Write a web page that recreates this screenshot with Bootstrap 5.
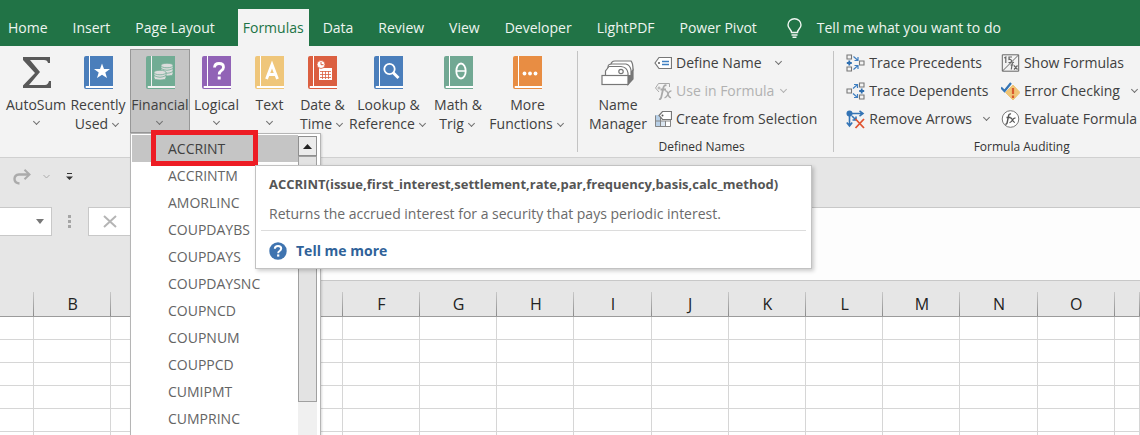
<!DOCTYPE html>
<html lang="en">
<head>
<meta charset="utf-8">
<meta name="viewport" content="width=device-width, initial-scale=1">
<title>Workbook - Formulas</title>
<link href="https://cdn.jsdelivr.net/npm/bootstrap@5.3.0/dist/css/bootstrap.min.css" rel="stylesheet">
<style>
  body { font-family: "Open Sans", "Noto Sans", sans-serif; font-size: 14px; line-height: 20px; color: #404040; background: #fff; }
  button { color: inherit; }
  svg { display: block; flex: none; }

  /* ribbon tabs */
  .tabs-bar { background: #217346; height: 46px; padding-top: 9px; flex: none; }
  .tabs-bar .nav-link { color: #eef5f0; padding: 9px 12px 8px 13px; white-space: nowrap; }
  .tabs-bar .nav-link.active { color: #217346; background: #f3f3f3; padding: 9px 5px 8px; margin: 0 1px 0 11px; }
  .tell-me { color: #eef5f0; gap: 15px; margin-left: 18px; white-space: nowrap; }

  /* ribbon body */
  .ribbon { background: #f3f3f3; height: 112px; border-bottom: 1px solid #d0d0d0; padding-top: 3px; flex: none; }
  .big-group { padding: 0 10px 0 6px; }
  .big-btn { border: 1px solid transparent; background: none; padding: 6px 0 0; line-height: 19px; white-space: nowrap; height: 84px; width: 100%; display: flex; flex-direction: column; align-items: center; gap: 6px; }
  .big-btn.opened { background: #c5c5c5; border-color: #989898; }
  .big-btn.opened .book { opacity: .8; }
  .w-s { width: 53px; } .w-m { width: 60px; } .w-l { width: 64px; } .w-xl { width: 79px; }
  .label-box { height: 38px; display: flex; flex-direction: column; align-items: center; }
  .chev { display: inline-block; width: 5px; height: 5px; border: solid #707070; border-width: 0 1px 1px 0; transform: rotate(45deg); margin: 0 3px 3px 5px; }
  .label-box > .chev { margin: 5px 0 0; }
  .sm-btn { border: 0; background: none; padding: 0; display: flex; align-items: center; gap: 4px; height: 28px; white-space: nowrap; }
  .sm-btn:disabled { color: #b1b1b1; }
  .sm-btn .chev { margin: 0 0 4px 10px; }
  .sm-btn:disabled .chev { border-color: #b1b1b1; margin-left: 3px; }
  .audit-group { padding-left: 12px; }
  .audit-group .sm-btn { margin-right: 12px; }
  .audit-group .chev { margin-left: 8px; }
  .group-name { font-size: 12px; line-height: 16px; text-align: center; margin-top: 6px; color: #333; }
  .vrule { width: 1px; background: #c3c3c3; margin: 2px 0 5px; flex: none; }

  /* function list */
  .fn-menu { position: absolute; left: 0; top: 84px; width: 191px; height: calc(100vh - 133px); background: #fff; border: 1px solid #b5b5b5; border-bottom: 0; padding: 1px 1px 0; z-index: 20; box-shadow: 1px 1px 2px rgba(0,0,0,.15); }
  .fn-list { list-style: none; margin: 0; padding: 0; width: 166px; }
  .fn-list button { display: block; width: 100%; border: 0; background: none; text-align: left; height: 27px; padding: 0 0 0 36px; color: #646464; }
  .fn-list li:first-child button { background: #c5c5c5; color: #404040; }
  .scroll-track { width: 19px; background: #f0f0f0; margin: 1px 2px 0 auto; }
  .scroll-up { height: 20px; border: 1px solid #8f8f8f; background: #ececec; padding: 0; display: flex; align-items: center; justify-content: center; width: 100%; }
  .scroll-thumb { height: 246px; border: 1px solid #a0a0a0; background: #e3e3e3; }
  .marker { position: absolute; left: 20px; top: -4px; width: 107px; height: 36px; border: 5px solid #ed1c24; }
  .fn-tip { position: absolute; left: 124px; top: 31px; width: 557px; height: 104px; background: #fff; border: 1px solid #c2c2c2; box-shadow: 2px 2px 4px rgba(0,0,0,.2); padding: 8px 5px 0; color: #6a6a6a; white-space: nowrap; z-index: 2; }
  .fn-tip strong, .fn-tip p { display: block; margin: 0; padding-left: 8px; }
  .fn-tip strong { color: #555; font-size: 13px; }
  .fn-tip p { padding-top: 10px; padding-bottom: 6px; }
  .fn-tip a { display: flex; align-items: center; gap: 9px; padding: 10px 0 0 8px; border-top: 1px solid #dcdcdc; color: #2f6299; font-weight: 700; text-decoration: none; }

  /* bars under the ribbon */
  .quick-bar { background: #e6e6e6; height: 49px; padding: 0 0 12px 13px; gap: 12px; flex: none; }
  .quick-bar button, .edit-box button { border: 0; background: none; padding: 0; }
  .formula-bar { background: #e6e6e6; height: 74px; flex: none; }
  .name-box, .edit-box { background: #fff; height: 29px; border: 1px solid #c8c8c8; }
  .name-box { width: 52px; border-left: 0; }
  .name-box input { width: 36px; border: 0; outline: 0; background: none; }
  .dots { width: 36px; height: 29px; }
  .edit-box { width: 150px; padding-left: 14px; }
  .formula-input { border: solid #c8c8c8; border-width: 1px 0; background: #fdfdfd; border-radius: 0; outline: 0; resize: none; }

  /* sheet */
  .sheet-area { min-height: 0; }
  .sheet { table-layout: fixed; width: 100%; border-collapse: separate; border-spacing: 0; }
  .sheet th { height: 36px; padding: 11px 0 0; background: linear-gradient(#c8c8c8, #8c8c8c) right bottom / 1px 24px no-repeat #e6e6e6; border-bottom: 1px solid #9b9b9b; font-weight: 400; font-size: 16px; line-height: 24px; text-align: center; color: #222; }
  .sheet td { height: 23px; padding: 0; border: solid #d6d6d6; border-width: 0 1px 1px 0; }
  .first-col { width: 34px; } .last-col { width: 25px; }
</style>
</head>
<body class="vh-100 d-flex flex-column overflow-hidden">

<svg width="0" height="0" class="position-absolute" aria-hidden="true">
  <symbol id="book" viewBox="0 0 29 33">
    <path d="M2 0H29V30H2V32H29V33H2Q0 33 0 31V2Q0 0 2 0Z" fill="currentColor"/>
    <path d="M2 30H29V32H2Q1 31 2 30Z" fill="#fff"/>
    <path d="M5.500 0V30" stroke="#fff" stroke-width="1"/>
  </symbol>
</svg>

<nav class="tabs-bar d-flex" aria-label="Ribbon tabs">
  <a class="nav-link ps-2" href="#">Home</a>
  <a class="nav-link" href="#">Insert</a>
  <a class="nav-link" href="#">Page Layout</a>
  <a class="nav-link active" href="#" aria-current="page">Formulas</a>
  <a class="nav-link" href="#">Data</a>
  <a class="nav-link" href="#">Review</a>
  <a class="nav-link" href="#">View</a>
  <a class="nav-link" href="#">Developer</a>
  <a class="nav-link" href="#">LightPDF</a>
  <a class="nav-link" href="#">Power Pivot</a>
  <div class="tell-me d-flex align-items-center">
    <svg width="15" height="20" viewBox="0 0 15 20" fill="none" stroke="#eef5f0" stroke-width="1.400"><path d="M4.500 14.500C4.500 11.500 1 10.500 1 7A6.500 6.300 0 0 1 14 7C14 10.500 10.500 11.500 10.500 14.500ZM4.500 17H10.500M5.500 19.200H9.500"/></svg>
    <span>Tell me what you want to do</span>
  </div>
</nav>

<main class="flex-grow-1 d-flex flex-column sheet-area">
<section class="ribbon d-flex" aria-label="Formulas">
  <div class="big-group d-flex align-items-start">
    <div class="w-m"><button class="big-btn">
      <svg width="29" height="33" viewBox="0 0 29 33"><path d="M1 1H28V7H26Q25.500 4 22 4H8L18 16L7 29H23Q26 29 27 25H29V32H1V29.500L13 17L1 4Z" fill="#595959"/></svg>
      <span class="label-box"><span>AutoSum</span><i class="chev"></i></span></button></div>
    <div class="w-l"><button class="big-btn">
      <svg class="book" width="29" height="33" color="#4a7ebb"><use href="#book"/><path d="M18 7.500L20 13H26L21.300 16.500L23 22L18 18.700L13 22L14.700 16.500L10 13H16Z" fill="#fff"/></svg>
      <span class="label-box"><span>Recently</span><span>Used<i class="chev"></i></span></span></button></div>
    <div class="w-m position-relative">
      <button class="big-btn opened" aria-expanded="true">
        <svg class="book" width="29" height="33" color="#5da689"><use href="#book"/><g fill="#e4e4e4" stroke="#5da689" stroke-width=".8"><path d="M15 9.500V18Q15 20 21 20Q27 20 27 18V9.500Z"/><ellipse cx="21" cy="9.500" rx="6" ry="2.300"/><path d="M15 12.500Q21 16 27 12.500M15 15.500Q21 19 27 15.500" fill="none"/><path d="M8 16.500V22Q8 24 14 24Q20 24 20 22V16.500Z"/><ellipse cx="14" cy="16.500" rx="6" ry="2.300"/><path d="M8 19.500Q14 23 20 19.500" fill="none"/></g></svg>
        <span class="label-box"><span>Financial</span><i class="chev"></i></span></button>
      <div class="fn-menu d-flex align-items-start">
        <ul class="fn-list">
          <li><button>ACCRINT</button></li><li><button>ACCRINTM</button></li><li><button>AMORLINC</button></li><li><button>COUPDAYBS</button></li><li><button>COUPDAYS</button></li><li><button>COUPDAYSNC</button></li><li><button>COUPNCD</button></li><li><button>COUPNUM</button></li><li><button>COUPPCD</button></li><li><button>CUMIPMT</button></li><li><button>CUMPRINC</button></li>
        </ul>
        <div class="scroll-track align-self-stretch">
          <button class="scroll-up" aria-label="Scroll up"><svg width="9" height="5"><path d="M0 5L4.500 0L9 5Z" fill="#222"/></svg></button>
          <div class="scroll-thumb"></div>
        </div>
        <div class="marker"></div>
        <div class="fn-tip" role="tooltip">
          <strong>ACCRINT(issue,first_interest,settlement,rate,par,frequency,basis,calc_method)</strong>
          <p>Returns the accrued interest for a security that pays periodic interest.</p>
          <a href="#"><svg width="18" height="18" viewBox="0 0 18 18"><circle cx="9" cy="9" r="8.700" fill="#3f74b0"/><path d="M5.800 6.800Q6 4 9 4Q12.200 4 12.200 6.600Q12.200 8 10.600 9Q9.200 9.800 9.200 11.200" fill="none" stroke="#fff" stroke-width="2"/><rect x="8.100" y="12.400" width="2.200" height="2.200" fill="#fff"/></svg>Tell me more</a>
        </div>
      </div>
    </div>
    <div class="w-s"><button class="big-btn">
      <svg class="book" width="29" height="33" color="#9163b6"><use href="#book"/><path d="M12.500 11.500Q12.800 7.500 17 7.500Q21.500 7.500 21.500 11.200Q21.500 13 19.300 14.700Q17.200 16.200 17.200 18.500" fill="none" stroke="#fff" stroke-width="2.800"/><rect x="15.700" y="20.500" width="3" height="3" fill="#fff"/></svg>
      <span class="label-box"><span>Logical</span><i class="chev"></i></span></button></div>
    <div class="w-s"><button class="big-btn">
      <svg class="book" width="29" height="33" color="#efc67a"><use href="#book"/><path d="M11.500 23L17 8.500L22.500 23M13.500 18.500H20.500" fill="none" stroke="#fff" stroke-width="2.800"/></svg>
      <span class="label-box"><span>Text</span><i class="chev"></i></span></button></div>
    <div class="w-s"><button class="big-btn">
      <svg class="book" width="29" height="33" color="#db5f40"><use href="#book"/><rect x="11" y="12" width="13" height="12" fill="#fff"/><path d="M12 15.500H23M12 18.500H23M12 21.500H23M14.500 15V23M17.500 15V23M20.500 15V23" stroke="#db5f40" stroke-width=".8"/><circle cx="13" cy="8.500" r="4" fill="#fff" stroke="#db5f40" stroke-width=".8"/><path d="M13 6V8.700H15.500" fill="none" stroke="#db5f40"/></svg>
      <span class="label-box"><span>Date &amp;</span><span>Time<i class="chev"></i></span></span></button></div>
    <div class="w-xl"><button class="big-btn">
      <svg class="book" width="29" height="33" color="#4a7ebb"><use href="#book"/><circle cx="15.500" cy="13" r="5.200" fill="none" stroke="#fff" stroke-width="1.800"/><path d="M19 16.500L24.500 22" stroke="#fff" stroke-width="3"/></svg>
      <span class="label-box"><span>Lookup &amp;</span><span>Reference<i class="chev"></i></span></span></button></div>
    <div class="w-m"><button class="big-btn">
      <svg class="book" width="29" height="33" color="#71a893"><use href="#book"/><ellipse cx="17" cy="15" rx="4.700" ry="7.500" fill="none" stroke="#fff" stroke-width="1.800"/><path d="M12.500 15H21.500" stroke="#fff" stroke-width="1.500"/></svg>
      <span class="label-box"><span>Math &amp;</span><span>Trig<i class="chev"></i></span></span></button></div>
    <div class="w-xl"><button class="big-btn">
      <svg class="book" width="29" height="33" color="#e88d43"><use href="#book"/><g fill="#fff"><circle cx="11.500" cy="17.500" r="1.900"/><circle cx="17" cy="17.500" r="1.900"/><circle cx="22.500" cy="17.500" r="1.900"/></g></svg>
      <span class="label-box"><span>More</span><span>Functions<i class="chev"></i></span></span></button></div>
  </div>
  <div class="vrule me-2"></div>

  <div>
    <div class="d-flex">
      <div class="w-l"><button class="big-btn">
        <svg width="34" height="33" viewBox="0 0 34 33" fill="#fff" stroke="#777" stroke-width="1.200"><path d="M27 20L32 14V23L27 28.500Z" fill="#777"/><path d="M10 18V9Q10 5 14 5H30Q32 7 32 14L27 20"/><path d="M7 19V11Q7 8 11 8H25Q29 9 30 14V19"/><path d="M4.500 20V15L8 10.500H20Q26 11 27 17V20"/><circle cx="20" cy="15.500" r="2.200"/><rect x="1" y="19.500" width="26" height="9"/></svg>
        <span class="label-box"><span>Name</span><span>Manager</span></span></button></div>
      <div class="ps-1">
        <button class="sm-btn"><svg width="18" height="18" viewBox="0 0 18 18" fill="none"><path d="M1 9L5 3.500H17.500V14.500H5Z" fill="#fff" stroke="#777" stroke-width="1.200"/><circle cx="5" cy="9" r="1" fill="#555"/><path d="M8 7.500H15M8 10.500H15" stroke="#3f7fc1" stroke-width="1.300"/></svg>Define Name<i class="chev"></i></button>
        <button class="sm-btn" disabled><svg width="18" height="18" viewBox="0 0 18 18" fill="none" stroke="#a9a9a9"><path d="M5 10L1.500 6L4.500 1.500H15.500V5"/><circle cx="5" cy="6" r="1"/><path d="M12.500 3.500Q10 2.500 9.300 6L7.300 15Q6.800 17.500 5 17M6.500 7.500H12" stroke-width="1.800"/><path d="M11 9Q13 8 14 12T17 15.500M17.500 8.800Q15 9 14 12T10.500 16" stroke-width="1.300"/></svg>Use in Formula<i class="chev"></i></button>
        <button class="sm-btn"><svg width="18" height="18" viewBox="0 0 18 18"><rect x="1" y="5" width="15" height="12" fill="#fff"/><rect x="1" y="5" width="5" height="12" fill="#b7cfe6"/><rect x="6" y="11" width="5" height="6" fill="#dbe6f1"/><path d="M1.500 5.500V16.500H16.500V10M1 11H16M6.500 6V16.500M11.500 11V16.500" fill="none" stroke="#858585"/><path d="M5 5.500L8.500 1.500H17.500V9.500H8.500Z" fill="#fff" stroke="#777" stroke-width="1.200"/><circle cx="8.500" cy="5.500" r="1" fill="#555"/></svg>Create from Selection</button>
      </div>
    </div>
    <div class="group-name">Defined Names</div>
  </div>
  <div class="vrule ms-3"></div>

  <div class="audit-group">
    <div class="d-flex">
      <div>
        <button class="sm-btn"><svg width="19" height="18" viewBox="0 0 19 18" fill="none"><path d="M1 1H5.500V5H1ZM1 13H5.500V17H1ZM13.500 7H18V11H13.500Z" stroke="#777" stroke-width="1.100"/><path d="M3.300 6.500V11.500M.8 9H5.800" stroke="#2f6fb0" stroke-width="1.800"/><path d="M7.500 2.500L12 6.500M12 3V6.500H8.500M7.500 15.500L12 11.500M12 15V11.500H8.500" stroke="#3f7fc1" stroke-width="1.200"/></svg>Trace Precedents</button>
        <button class="sm-btn"><svg width="19" height="18" viewBox="0 0 19 18" fill="none"><path d="M1 7H5.500V11H1ZM13.500 1H18V5H13.500ZM13.500 13H18V17H13.500Z" stroke="#777" stroke-width="1.100"/><path d="M15.700 6.500V11.500M13.200 9H18.200" stroke="#2f6fb0" stroke-width="1.800"/><path d="M7 6.500L11.500 2.500M8 2.500H11.500V6M7 11.500L11.500 15.500M8 15.500H11.500V12" stroke="#3f7fc1" stroke-width="1.200"/></svg>Trace Dependents</button>
        <button class="sm-btn"><svg width="19" height="19" viewBox="0 0 19 19" fill="none"><circle cx="3.500" cy="3.500" r="3" fill="#3474b5"/><path d="M3.500 4V16M.8 12.500L3.500 16L6.200 12.500M5 3.500H17M13.500 .8L17 3.500L13.500 6.200M6 6L10 10M10 6.500V10H6.500" stroke="#3474b5" stroke-width="1.600"/><path d="M9.500 9L18 18M18 9L9.500 18" stroke="#df5330" stroke-width="1.800"/></svg>Remove Arrows<i class="chev"></i></button>
      </div>
      <div>
        <button class="sm-btn"><svg width="19" height="18" viewBox="0 0 18 18" fill="none" stroke="#666"><path d="M.8 .8H17.200V17.200H.8ZM1 17L17 1"/><path d="M2.800 4L4.300 3V9M10.500 3H7.500V5.500Q10.500 5.200 10 7.500Q9.500 9 7 8.500" stroke-width="1.200"/><path d="M12.500 8.500Q10.800 8 10.500 10.500L9.800 15.500M9 11H12M12.500 11.500L16 15.500M16 11.500L12.500 15.500" stroke-width="1.200"/></svg>Show Formulas</button>
        <button class="sm-btn"><svg width="19" height="19" viewBox="0 0 19 19" fill="none"><path d="M12 3L19 10.500L12 18L4.500 10.500Z" fill="#efc475" stroke="#efc475" stroke-width="1" stroke-linejoin="round"/><path d="M12 6V12M12 13.500V16" stroke="#d95b2e" stroke-width="2.200"/><path d="M0 5.500L3.500 9L10 1" stroke="#3474b5" stroke-width="2.200"/></svg>Error Checking<i class="chev"></i></button>
        <button class="sm-btn"><svg width="19" height="18" viewBox="0 0 18 18" fill="none" stroke="#555"><circle cx="9" cy="9" r="8.300" stroke="#777" fill="#fff"/><path d="M9.500 4Q7.500 3.500 7 6L5.700 12.500Q5.300 14.500 3.800 14M5 7.500H9" stroke-width="1.400"/><path d="M8.500 8Q10 7.500 11 10T13.500 12.500M14 7.800Q12 8 11 10T8 12.700" stroke-width="1.200"/></svg>Evaluate Formula</button>
      </div>
    </div>
    <div class="group-name ps-5">Formula Auditing</div>
  </div>
</section>

<div class="quick-bar d-flex align-items-center">
  <button aria-label="Redo"><svg width="18" height="16" viewBox="0 0 18 16" fill="none" stroke="#ababab"><path d="M15 5.500H6Q1.500 6 1.500 10Q1.500 14 6.500 14.500" stroke-width="2.400"/><path d="M11.500 .8L16.500 5.500L11.500 10.200" stroke-width="2"/></svg></button>
  <button class="pe-1" aria-label="Redo history"><svg width="7" height="5" fill="none" stroke="#ababab"><path d="M.5 1L3.500 4L6.500 1"/></svg></button>
  <button aria-label="Customize toolbar"><svg width="7" height="8"><path d="M1 .5H6" stroke="#333"/><path d="M0 3.500H7L3.500 7Z" fill="#333"/></svg></button>
</div>

<div class="formula-bar d-flex align-items-start">
  <div class="name-box d-flex align-items-center"><input aria-label="Name box"><svg width="8" height="5"><path d="M0 0H8L4 5Z" fill="#777"/></svg></div>
  <div class="dots d-flex align-items-center justify-content-center"><svg width="4" height="14" fill="#a5a5a5"><path d="M0 0H3V3H0ZM0 5H3V8H0ZM0 10H3V13H0Z"/></svg></div>
  <div class="edit-box d-flex align-items-center"><button aria-label="Cancel"><svg width="14" height="13" fill="none" stroke="#b5b5b5" stroke-width="2"><path d="M1 1L13 12M13 1L1 12"/></svg></button></div>
  <textarea class="formula-input flex-grow-1 h-100" aria-label="Formula"></textarea>
</div>

<div class="sheet-area flex-grow-1 overflow-hidden">
<table class="sheet">
  <colgroup><col class="first-col"><col span="14"><col class="last-col"></colgroup>
  <thead><tr><th></th><th>B</th><th></th><th></th><th></th><th>F</th><th>G</th><th>H</th><th>I</th><th>J</th><th>K</th><th>L</th><th>M</th><th>N</th><th>O</th><th></th></tr></thead>
  <tbody id="cells"></tbody>
</table>
</div>
</main>

<script>
  document.getElementById('cells').innerHTML = ('<tr>' + '<td></td>'.repeat(16) + '</tr>').repeat(6);
</script>
<script src="https://cdn.jsdelivr.net/npm/bootstrap@5.3.0/dist/js/bootstrap.bundle.min.js"></script>
</body>
</html>
